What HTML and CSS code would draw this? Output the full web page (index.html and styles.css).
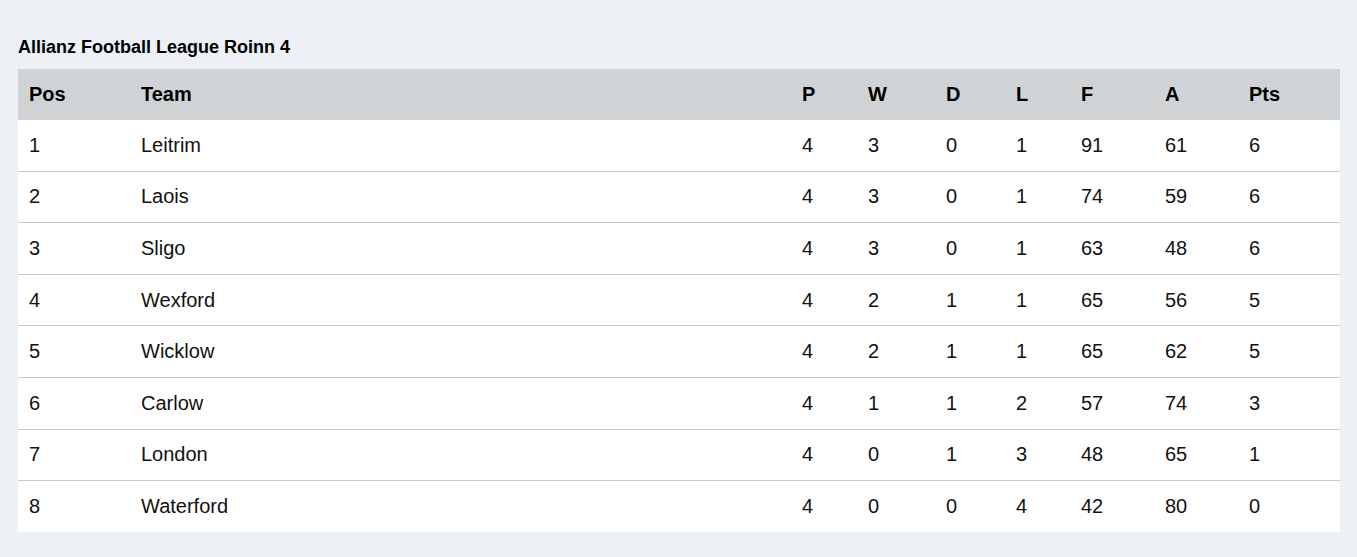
FILE: index.html
```html
<!DOCTYPE html>
<html>
<head>
<meta charset="utf-8">
<link rel="stylesheet" href="styles.css">
</head>
<body>
<div class="wrap">
  <h2 class="title">Allianz Football League Roinn 4</h2>
  <table class="league">
    <colgroup>
      <col class="c-pos"><col class="c-team"><col class="c-p"><col class="c-w"><col class="c-d"><col class="c-l"><col class="c-f"><col class="c-a"><col class="c-pts">
    </colgroup>
    <thead>
      <tr><th>Pos</th><th>Team</th><th>P</th><th>W</th><th>D</th><th>L</th><th>F</th><th>A</th><th>Pts</th></tr>
    </thead>
    <tbody>
      <tr><td>1</td><td>Leitrim</td><td>4</td><td>3</td><td>0</td><td>1</td><td>91</td><td>61</td><td>6</td></tr>
      <tr><td>2</td><td>Laois</td><td>4</td><td>3</td><td>0</td><td>1</td><td>74</td><td>59</td><td>6</td></tr>
      <tr><td>3</td><td>Sligo</td><td>4</td><td>3</td><td>0</td><td>1</td><td>63</td><td>48</td><td>6</td></tr>
      <tr><td>4</td><td>Wexford</td><td>4</td><td>2</td><td>1</td><td>1</td><td>65</td><td>56</td><td>5</td></tr>
      <tr><td>5</td><td>Wicklow</td><td>4</td><td>2</td><td>1</td><td>1</td><td>65</td><td>62</td><td>5</td></tr>
      <tr><td>6</td><td>Carlow</td><td>4</td><td>1</td><td>1</td><td>2</td><td>57</td><td>74</td><td>3</td></tr>
      <tr><td>7</td><td>London</td><td>4</td><td>0</td><td>1</td><td>3</td><td>48</td><td>65</td><td>1</td></tr>
      <tr><td>8</td><td>Waterford</td><td>4</td><td>0</td><td>0</td><td>4</td><td>42</td><td>80</td><td>0</td></tr>
    </tbody>
  </table>
</div>
</body>
</html>
```
FILE: styles.css
```css
html, body {
  margin: 0;
  padding: 0;
  background: #edf1f5;
  font-family: "Liberation Sans", Arial, sans-serif;
  color: #111;
}
.wrap {
  padding: 37px 17px 25px 18px;
}
.title {
  margin: 0 0 11px 0;
  font-size: 18px;
  font-weight: bold;
  line-height: 21px;
  color: #000;
}
.league {
  width: 1322px;
  border-collapse: collapse;
  table-layout: fixed;
  background: #fff;
  font-size: 20px;
}
.c-pos { width: 112px; }
.c-team { width: 661px; }
.c-p { width: 66px; }
.c-w { width: 78px; }
.c-d { width: 70px; }
.c-l { width: 65px; }
.c-f { width: 84px; }
.c-a { width: 84px; }
.c-pts { width: 102px; }
.league th {
  background: #cfd3d6;
  text-align: left;
  font-weight: bold;
  height: 51px;
  padding: 0 11px;
  color: #000;
}
.league td {
  height: 50.6px;
  padding: 0 11px;
  border-top: 1px solid #c9c9c9;
  color: #111;
}
.league tbody tr:first-child td {
  border-top: none;
}
```
